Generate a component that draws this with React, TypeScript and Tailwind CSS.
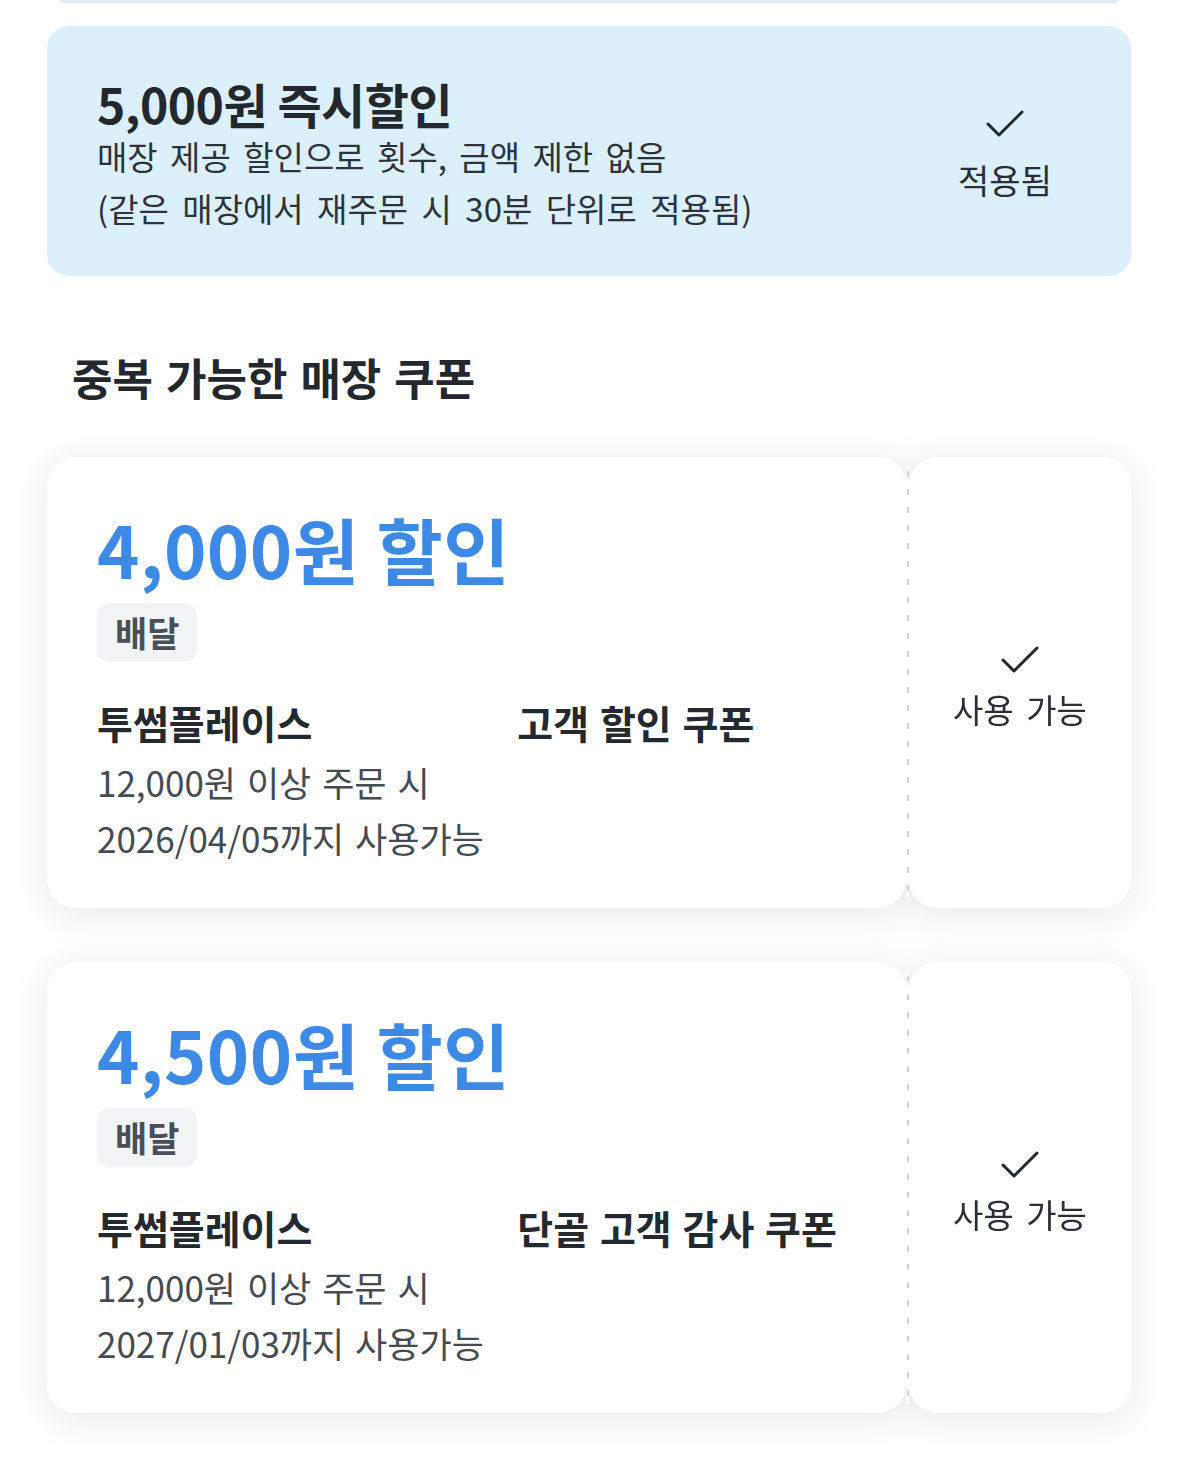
import React from 'react'

const font = { fontFamily: '"Noto Sans CJK KR", "Noto Sans", sans-serif' }

const CheckMark = () => (
  <svg width="38" height="28" viewBox="0 0 38 28" fill="none" className="text-[#23282e]">
    <path d="M2 14 L13 25 L36 2" stroke="currentColor" strokeWidth="3" strokeLinecap="round" strokeLinejoin="round" />
  </svg>
)

type Coupon = {
  amount: string
  name: string
  minOrder: string
  until: string
}

const coupons: Coupon[] = [
  { amount: '4,000원 할인', name: '고객 할인 쿠폰', minOrder: '12,000원 이상 주문 시', until: '2026/04/05까지 사용가능' },
  { amount: '4,500원 할인', name: '단골 고객 감사 쿠폰', minOrder: '12,000원 이상 주문 시', until: '2027/01/03까지 사용가능' },
]

const CouponCard = ({ coupon }: { coupon: Coupon }) => (
  <div className="mx-[47px] flex drop-shadow-[0_6px_18px_rgba(0,0,0,0.09)]">
    {/* left: coupon info */}
    <div className="w-[859px] bg-white rounded-[28px] pl-[50px] pt-[49px] pb-[42px]">
      <div className="text-[72px] leading-[83px] font-bold text-[#3d8ae6] tracking-[0.5px]">{coupon.amount}</div>
      <div className="mt-[14px] inline-flex h-[59px] items-center rounded-[12px] bg-[#f2f3f5] px-[18px] text-[35px] font-bold text-[#4a4f57]">
        배달
      </div>
      <div className="mt-[36px] flex items-center text-[39px] leading-[48px] font-bold text-[#24292f] [word-spacing:2px]">
        <span>투썸플레이스</span>
        <span className="inline-block w-[205px]" />
        <span>{coupon.name}</span>
      </div>
      <div className="mt-[8px] text-[35px] leading-[56px] text-[#454b53] [word-spacing:3px]">{coupon.minOrder}</div>
      <div className="text-[35px] leading-[56px] text-[#454b53] [word-spacing:3px]">{coupon.until}</div>
    </div>
    {/* dashed seam */}
    <div className="w-[3px] my-[10px] bg-white flex justify-center py-[4px]">
      <div className="w-[2px] h-full bg-[linear-gradient(to_bottom,#d6d6d6_6px,transparent_6px)] bg-[length:2px_18px]" />
    </div>
    {/* right: status */}
    <div className="flex-1 bg-white rounded-[28px] flex flex-col items-center justify-center pt-[10px]">
      <CheckMark />
      <div className="mt-[15px] text-[33px] leading-[40px] text-[#2a2f36] [word-spacing:5px]">사용 가능</div>
    </div>
  </div>
)

export default function App() {
  return (
    <div className="min-h-screen bg-white pb-[60px]" style={font}>
      {/* bottom edge of the card above */}
      <div className="mx-[60px] h-[3px] rounded-b-[6px] bg-[#e4ebf0]" />

      {/* instant discount */}
      <div className="mx-[47px] mt-[23px] h-[250px] rounded-[22px] bg-[#dcf0fc] flex justify-between">
        <div className="pl-[50px] pt-[50px]">
          <div className="text-[48px] leading-[54px] font-bold text-[#23282e] tracking-[-0.5px]">5,000원 즉시할인</div>
          <div className="text-[33px] leading-[52px] text-[#2d333a] [word-spacing:5px]">매장 제공 할인으로 횟수, 금액 제한 없음</div>
          <div className="text-[33px] leading-[52px] text-[#2d333a] [word-spacing:6px]">(같은 매장에서 재주문 시 30분 단위로 적용됨)</div>
        </div>
        <div className="w-[200px] mr-[26px] flex flex-col items-center justify-center pt-[8px]">
          <CheckMark />
          <div className="mt-[22px] text-[34px] leading-[40px] text-[#2a2f36]">적용됨</div>
        </div>
      </div>

      {/* section title */}
      <h2 className="mt-[73px] pl-[72px] text-[44px] leading-[56px] font-bold text-[#23282e] [word-spacing:3px]">
        중복 가능한 매장 쿠폰
      </h2>

      <div className="mt-[52px] flex flex-col gap-[54px]">
        {coupons.map((c) => (
          <CouponCard key={c.amount} coupon={c} />
        ))}
      </div>
    </div>
  )
}
